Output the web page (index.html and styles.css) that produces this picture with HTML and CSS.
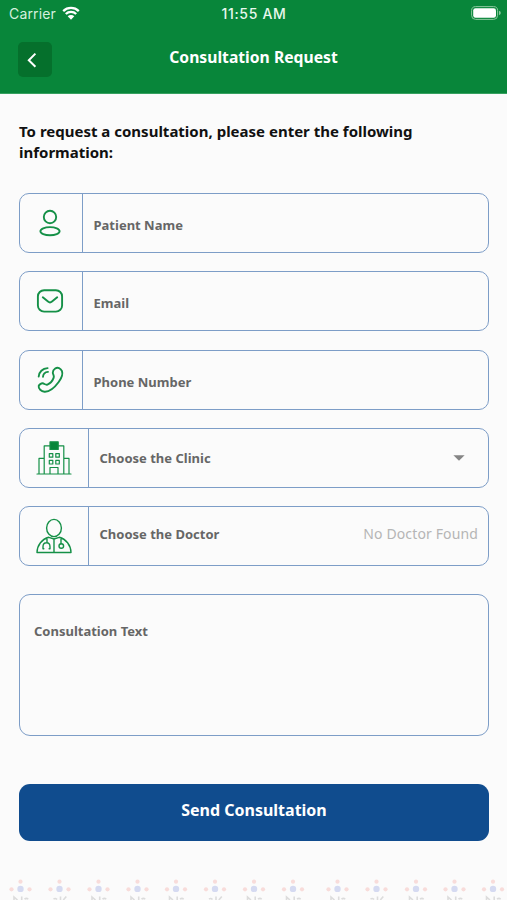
FILE: index.html
```html
<!DOCTYPE html>
<html lang="en">
<head>
<meta charset="utf-8">
<title>Consultation Request</title>
<link rel="stylesheet" href="styles.css">
</head>
<body>
<header class="header">
  <div class="status">
    <div class="carrier"><span>Carrier</span>
      <svg width="18" height="14" viewBox="0 0 18 14"><path d="M1.2 5.1a11.2 11.2 0 0 1 15.6 0M3.8 8a7.4 7.4 0 0 1 10.4 0" fill="none" stroke="currentColor" stroke-width="2.3"/><path d="M9 13.7 5.7 10.3a4.7 4.7 0 0 1 6.6 0z" fill="currentColor"/></svg>
    </div>
    <time class="clock">11:55 AM</time>
    <svg class="battery" width="30" height="14" viewBox="0 0 30 14"><rect x=".6" y=".6" width="26" height="12.8" rx="4" fill="none" stroke="#8bc79d" stroke-width="1"/><rect x="2.2" y="2.3" width="22.8" height="9.4" rx="2.3" fill="#fff"/><path d="M28 4.8q1.8.6 1.8 2.2T28 9.2z" fill="#8bc79d"/></svg>
  </div>
  <div class="titlebar">
    <button class="back" aria-label="Back"><svg width="34" height="34" viewBox="0 0 34 34"><path d="m17.4 10.6-6.6 6.6 6.6 6.6" fill="none" stroke="#fff" stroke-width="2"/></svg></button>
    <h1 class="title">Consultation Request</h1>
  </div>
</header>
<main class="form">
  <p class="intro">To request a consultation, please enter the following information:</p>
  <div class="fields">
    <div class="field">
      <div class="icon"><svg width="30" height="30" viewBox="0 0 30 30"><circle cx="15" cy="9" r="6.2"/><ellipse cx="15" cy="23.2" rx="9.6" ry="4.1"/></svg></div>
      <span class="label name">Patient Name</span>
    </div>
    <div class="field">
      <div class="icon"><svg width="30" height="30" viewBox="0 0 30 30"><rect x="2.9" y="4.2" width="24.2" height="21.4" rx="6.2"/><path d="m7.8 11.3 5.2 4.3q2 1.6 4 0l5.2-4.3"/></svg></div>
      <span class="label email">Email</span>
    </div>
    <div class="field">
      <div class="icon"><svg width="30" height="30" viewBox="0 0 30 30"><path d="M20.2 3.6c2.5-1.8 5.5-.5 6.8 2.6.9 2.5-.2 6.5-3.3 10.8-4.5 6.1-9.6 10-14.2 9.7-3.3-.3-6.2-3-5.8-5.7.2-1.3 2.7-2.8 3.9-2.7 1.7.2 2.9 2 4.8 1.3 2.3-1 5.4-4.4 6.3-7 .7-2-.8-3-.9-4.8-.1-1.7.9-3.1 2.4-4.2z"/><path d="M3.7 11.5C4 7 7.5 3.4 12.6 3.1M8 11.8c.2-2.8 2-4.7 5-4.9"/></svg></div>
      <span class="label phone">Phone Number</span>
    </div>
    <div class="field wide">
      <div class="icon"><svg class="thin" width="38" height="38" viewBox="0 0 38 38"><path d="M2 35h34M4 34.5V19.4h5.2M34 34.5V19.4h-5.2M9.2 34.5V6.9h5.5M28.8 34.5V6.9h-5.5M15 34.5v-6h8v6"/><path d="M14.3 14.6h3.5v3.6h-3.5zM20.8 14.6h3.5v3.6h-3.5zM14.3 21.4h3.5V25h-3.5zM20.8 21.4h3.5V25h-3.5z"/><rect x="15" y="2.8" width="8.2" height="7.7" fill="#08863a"/></svg></div>
      <span class="label clinic">Choose the Clinic</span>
      <svg class="caret" width="12" height="6" viewBox="0 0 12 6"><path d="M.4.2h11.2L6 5.8z"/></svg>
    </div>
    <div class="field wide">
      <div class="icon"><svg class="thin doctor" width="38" height="38" viewBox="0 0 38 38"><ellipse cx="19" cy="11" rx="7.4" ry="8.6"/><path d="M13.8 20.3C7 22 2.2 28.2 2 35.5h34c-.2-7.3-5-13.5-11.8-15.2L19 22zM19 22v13.5M12 21v4.5M8.8 31.8H8v-2.1c0-5.3 7-5.3 7 0v2.1h-.9M26 21.2v5.5"/><circle cx="26.3" cy="29" r="2.3"/></svg></div>
      <span class="label docname">Choose the Doctor</span>
      <span class="empty">No Doctor Found</span>
    </div>
  </div>
  <div class="message"><span class="label text">Consultation Text</span></div>
  <button class="send"><span>Send Consultation</span></button>
</main>
<footer class="pattern">
  <svg width="507" height="25" viewBox="0 0 507 25">
    <defs>
      <g id="motif"><circle cy="13.9" r="3.2" fill="#d5daf1"/><g fill="#f8dcda"><circle cy="6.7" r="2.1"/><circle cx="-9" cy="14.3" r="2.1"/><circle cx="9" cy="14.3" r="2.1"/></g></g>
      <path id="knot" d="M-6.5 25v-3l3.5 3M1.2 21.5V25M4 24.2q2-1.7 3.7 0"/>
      <path id="leaf" d="M-6 24q2-1.2 3.5.5M1 21.5V25M3.8 25l3-3.5"/>
    </defs>
    <use href="#motif" x="20.5"/><use href="#motif" x="59.5"/><use href="#motif" x="98.5"/><use href="#motif" x="137.5"/><use href="#motif" x="176"/><use href="#motif" x="215"/><use href="#motif" x="254"/><use href="#motif" x="293"/><use href="#motif" x="337.5"/><use href="#motif" x="376.5"/><use href="#motif" x="416"/><use href="#motif" x="454.5"/><use href="#motif" x="493"/>
    <g fill="none" stroke="#dcdcdc" stroke-width="1.6"><use href="#knot" x="20.5"/><use href="#leaf" x="59.5"/><use href="#knot" x="98.5"/><use href="#knot" x="137.5"/><use href="#knot" x="176"/><use href="#leaf" x="215"/><use href="#knot" x="254"/><use href="#knot" x="293"/><use href="#knot" x="337.5"/><use href="#leaf" x="376.5"/><use href="#knot" x="416"/><use href="#knot" x="454.5"/><use href="#knot" x="493"/></g>
  </svg>
</footer>
</body>
</html>
```
FILE: styles.css
```css
* { box-sizing: border-box; }
body {
  margin: 0;
  height: 900px;
  overflow: hidden;
  display: flex;
  flex-direction: column;
  background: #fbfbfb;
  font-family: "Noto Sans", sans-serif;
}
button { border: 0; padding: 0; font: inherit; }
svg { display: block; }
.header { height: 94px; flex: none; background: #08863a; border-bottom: 1px solid #36a05f; color: #fff; }
.status {
  height: 28px;
  padding: 0 7px 0 9px;
  display: grid;
  grid-template-columns: 1fr auto 1fr;
  align-items: center;
  font-family: Inter, sans-serif;
  font-size: 14px;
  line-height: 20px;
}
.carrier { display: flex; align-items: center; gap: 6px; letter-spacing: .15px; color: #d5f0de; }
.carrier svg { color: #fff; margin-top: -2px; }
.clock { font-weight: 500; letter-spacing: .7px; color: #e8f8ed; margin-right: 1px; }
.battery { justify-self: end; margin-top: -2px; margin-right: -1px; }
.titlebar { display: grid; grid-template-columns: 34px 1fr 34px; padding: 14px 18px 0; }
.back { width: 34px; height: 35px; background: #05702c; border-radius: 5px; }
.title { margin: 4px 0 0; text-align: center; font-size: 15.7px; line-height: 22px; font-weight: 700; white-space: nowrap; }
.form { padding: 27px 18px 0 19px; display: flex; flex-direction: column; flex: none; }
.intro { margin: 0; height: 44px; font-size: 15px; line-height: 21px; font-weight: 700; color: #111; }
.fields { margin-top: 28px; display: flex; flex-direction: column; gap: 18.3px; }
.field { height: 60px; display: flex; align-items: center; border: 1px solid #7d9dc7; border-radius: 10px; }
.icon { width: 63px; height: 100%; flex: none; display: grid; place-items: center; border-right: 1px solid #7d9dc7; padding-right: 2px; }
.wide .icon { width: 69px; padding-right: 1px; }
.icon svg { fill: none; stroke: #159047; stroke-width: 1.9; stroke-linecap: round; stroke-linejoin: round; }
.icon .thin { stroke-width: 1.2; }
.icon .doctor { stroke-width: 1.4; }
.label { font-size: 13px; line-height: 20px; font-weight: 700; color: #666; white-space: nowrap; margin-left: 10.5px; }
.name, .email, .phone { padding-top: 4px; }
.docname, .empty { padding-bottom: 5px; }
.caret { margin-left: auto; margin-right: 23px; fill: #858585; }
.empty { margin-left: auto; margin-right: 10px; font-size: 14px; line-height: 20px; letter-spacing: .13px; color: #b5b5b5; }
.message { margin-top: 27.5px; height: 142px; border: 1px solid #7d9dc7; border-radius: 11px; padding: 24px 3.5px; }
.send { margin-top: 48px; height: 57px; border-radius: 11px; background: #104c8e; color: #fff; font-size: 16px; font-weight: 700; line-height: 22px; padding-bottom: 5px; }
.pattern { margin-top: auto; height: 25px; overflow: hidden; }
```
